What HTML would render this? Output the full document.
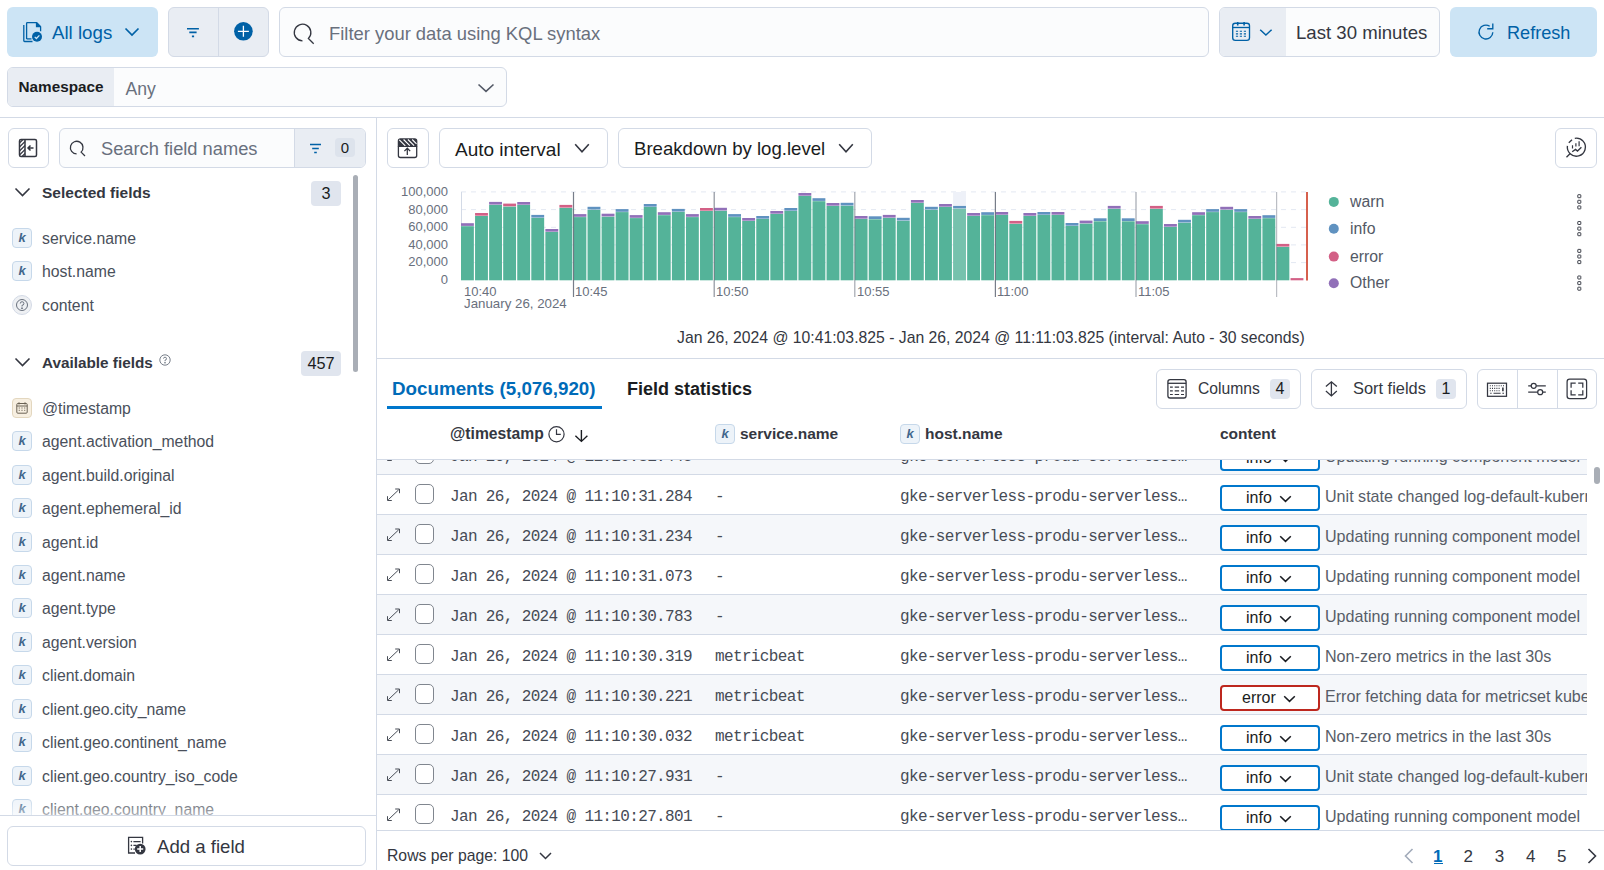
<!DOCTYPE html>
<html><head><meta charset="utf-8">
<style>
*{box-sizing:border-box;}
html,body{margin:0;padding:0;}
body{width:1604px;height:870px;position:relative;overflow:hidden;background:#fff;font-family:"Liberation Sans",sans-serif;color:#343741;}
.a{position:absolute;}
.t{position:absolute;white-space:nowrap;line-height:1;}
.mono{font-family:"Liberation Mono",monospace;}
svg{position:absolute;overflow:visible;}
.btnb{position:absolute;border:1px solid #d3dae6;border-radius:6px;background:#fff;}
.badge{position:absolute;background:#e0e5ee;border-radius:4px;color:#1a1c21;text-align:center;line-height:1;}
.tok{position:absolute;width:20px;height:20px;border-radius:4px;background:#edf3f9;border:1px solid #c6d8ea;}
.tok i{position:absolute;left:0;top:2px;width:18px;text-align:center;font-style:italic;font-weight:700;font-size:13px;color:#41668c;line-height:14px;font-family:"Liberation Sans",sans-serif;}
.fld{position:absolute;left:42px;font-size:15.8px;color:#4a505b;white-space:nowrap;line-height:1;}
</style></head>
<body>
<!-- ===== TOP BAR ===== -->
<div class="a" style="left:7px;top:7px;width:151px;height:50px;background:#cce4f5;border-radius:6px;"></div>
<svg style="left:15px;top:17px" width="30" height="30" viewBox="0 0 30 30" fill="none" stroke="#0061a6" stroke-width="1.3">
 <path d="M8.8 8 V23.8 Q8.8 24.5 9.6 24.5 H17.5"/><path d="M11.6 21.9 V6.4 Q11.6 5.6 12.4 5.6 H21.5 L25.6 9.7 V14.3"/><path d="M11.6 21.9 H16.5"/>
 <path d="M20.9 5.6 H22.3 L25.6 8.9 V10.2 H20.9 Z" fill="#0061a6" stroke="none"/>
 <circle cx="22" cy="19.8" r="5" fill="#0061a6" stroke="none"/><path d="M19.7 19.9 L21.4 21.5 L24.4 18.4" stroke="#cce4f5" stroke-width="1.3"/>
</svg>
<div class="t" style="left:52px;top:24px;font-size:18.7px;color:#0061a6;">All logs</div>
<svg style="left:124px;top:27px" width="16" height="10" viewBox="0 0 16 10" fill="none" stroke="#0061a6" stroke-width="1.7"><path d="M1.5 1.5 L8 8 L14.5 1.5"/></svg>

<div class="a" style="left:168px;top:7px;width:101px;height:50px;background:#e9edf3;border:1px solid #d3dae6;border-radius:6px;"></div>
<div class="a" style="left:218px;top:7px;width:1px;height:50px;background:#d3dae6;"></div>
<svg style="left:186px;top:26px" width="14" height="12" viewBox="0 0 14 12" fill="none" stroke="#0061a6" stroke-width="1.6"><path d="M1 2.8 H12.9 M3.3 6.4 H10.6 M5.9 10.4 H8.1"/></svg>
<svg style="left:234px;top:22px" width="19" height="19" viewBox="0 0 19 19"><circle cx="9.4" cy="9.3" r="9.3" fill="#0061a6"/><path d="M9.4 3.8 V14.8 M3.9 9.3 H14.9" stroke="#fff" stroke-width="1.3"/></svg>

<div class="a" style="left:279px;top:7px;width:930px;height:50px;background:#fbfcfd;border:1px solid #d3dae6;border-radius:6px;"></div>
<svg style="left:294px;top:24px" width="20" height="20" viewBox="0 0 20 20" fill="none" stroke="#343741" stroke-width="1.3"><path d="M8.5 16.8 A8.3 8.3 0 1 1 14.4 14.4 L19.7 19.7"/></svg>
<div class="t" style="left:329px;top:24.5px;font-size:18.4px;color:#69707d;">Filter your data using KQL syntax</div>

<div class="a" style="left:1219px;top:7px;width:221px;height:50px;background:#fbfcfd;border:1px solid #d3dae6;border-radius:6px;overflow:hidden;"><div class="a" style="left:0;top:0;width:66px;height:48px;background:#e9edf3;"></div></div>
<svg style="left:1225px;top:17px" width="60" height="30" viewBox="0 0 60 30" fill="none" stroke="#0061a6" stroke-width="1.35"><rect x="7.7" y="6.2" width="16.8" height="17.2" rx="2.6"/><path d="M7.7 10.5 H24.5"/><path d="M12.7 4.9 V8.4 M19.1 4.9 V8.4" stroke-width="1.6"/><path d="M10.9 14.2h2.2M14.8 14.2h2.2M18.8 14.2h2.2M10.9 16.9h2.2M14.8 16.9h2.2M18.8 16.9h2.2M10.9 19.3h2.2M14.8 19.3h2.2M18.8 19.3h2.2" stroke-width="1.1"/></svg>
<svg style="left:1225px;top:17px" width="60" height="30" viewBox="0 0 60 30" fill="none" stroke="#0061a6" stroke-width="1.5"><path d="M35.2 12.7 L40.9 18 L46.6 12.7"/></svg>
<div class="t" style="left:1296px;top:24px;font-size:18.6px;color:#343741;">Last 30 minutes</div>

<div class="a" style="left:1450px;top:7px;width:147px;height:50px;background:#cce4f5;border-radius:6px;"></div>
<svg style="left:1470px;top:17px" width="40" height="30" viewBox="0 0 40 30" fill="none" stroke="#0061a6" stroke-width="1.35"><path d="M22.8 15.2 A6.9 6.9 0 1 1 19.7 9.3"/><path d="M22.8 6.4 V11.7 H17.2"/></svg>
<div class="t" style="left:1507px;top:24px;font-size:18.1px;color:#0061a6;">Refresh</div>

<!-- Namespace -->
<div class="a" style="left:7px;top:67px;width:500px;height:40px;background:#fbfcfd;border:1px solid #d3dae6;border-radius:6px;overflow:hidden;"><div class="a" style="left:0;top:0;width:106px;height:38px;background:#e9edf3;"></div></div>
<div class="t" style="left:18.5px;top:79px;font-size:15.3px;font-weight:700;color:#1a1c21;">Namespace</div>
<div class="t" style="left:125.5px;top:81px;font-size:17.6px;color:#69707d;">Any</div>
<svg style="left:477px;top:83px" width="18" height="10" viewBox="0 0 18 10" fill="none" stroke="#535966" stroke-width="1.6"><path d="M1.5 1.5 L9 8.3 L16.5 1.5"/></svg>

<div class="a" style="left:0;top:117px;width:1604px;height:1px;background:#d3dae6;"></div>
<div class="a" style="left:376px;top:117px;width:1px;height:753px;background:#d3dae6;"></div>


<!-- ===== SIDEBAR ===== -->
<div class="btnb" style="left:8px;top:128px;width:41px;height:40px;"></div>
<svg style="left:18px;top:138px" width="20" height="20" viewBox="0 0 20 20" fill="none" stroke="#343741" stroke-width="1.5">
 <rect x="1.5" y="1.5" width="17" height="17" rx="1.5"/><path d="M7 1.5 V18.5"/>
 <path d="M1.5 5 L5 1.5 M1.5 9 L7 3.5 M1.5 13 L7 7.5 M1.5 17 L7 11.5 M4 18.5 L7 15.5" stroke-width="1.1"/>
 <path d="M15.5 10 H10 M12.5 7.5 L10 10 L12.5 12.5"/>
</svg>
<div class="a" style="left:59px;top:128px;width:307px;height:40px;background:#fbfcfd;border:1px solid #d3dae6;border-radius:6px;overflow:hidden;"><div class="a" style="left:234px;top:0;width:72px;height:38px;background:#e9edf3;border-left:1px solid #d3dae6;"></div></div>
<svg style="left:70px;top:141px" width="16" height="16" viewBox="0 0 16 16" fill="none" stroke="#343741" stroke-width="1.3"><path d="M6.6 12.9 A6.3 6.3 0 1 1 11.1 11.1 L15 15"/></svg>
<div class="t" style="left:101px;top:140px;font-size:18.3px;color:#69707d;">Search field names</div>
<svg style="left:309px;top:143px" width="13" height="11" viewBox="0 0 13 11" fill="none" stroke="#0061a6" stroke-width="1.4"><path d="M1 1.5 H12 M3.2 5.5 H9.8 M5.2 9.5 H7.8"/></svg>
<div class="badge" style="left:335px;top:138px;width:20px;height:19px;font-size:15px;padding-top:2px;background:#dde3ec;">0</div>

<!-- selected fields -->
<svg style="left:14px;top:187px" width="17" height="10" viewBox="0 0 17 10" fill="none" stroke="#343741" stroke-width="1.6"><path d="M1.5 1.5 L8.5 8.5 L15.5 1.5"/></svg>
<div class="t" style="left:42px;top:185px;font-size:15.5px;font-weight:700;color:#343741;">Selected fields</div>
<div class="badge" style="left:311px;top:181px;width:30px;height:25px;font-size:16.3px;padding-top:4px;">3</div>
<div class="a" style="left:353px;top:175px;width:5px;height:197px;background:#a9aeb6;border-radius:3px;"></div>

<div class="tok" style="left:12px;top:228px;"><i>k</i></div><div class="fld" style="top:231px;">service.name</div>
<div class="tok" style="left:12px;top:261px;"><i>k</i></div><div class="fld" style="top:264px;">host.name</div>
<div class="a" style="left:12px;top:295px;width:20px;height:20px;border-radius:10px;background:#eef0f3;border:1px solid #d3dae6;"></div>
<svg style="left:15px;top:298px" width="14" height="14" viewBox="0 0 14 14" fill="none" stroke="#69707d" stroke-width="1"><circle cx="7" cy="7" r="5.5"/><path d="M5.3 5.5 A1.8 1.8 0 1 1 7 7.3 V8.5"/><circle cx="7" cy="10.2" r="0.5" fill="#69707d"/></svg>
<div class="fld" style="top:298px;">content</div>

<!-- available fields -->
<svg style="left:14px;top:357px" width="17" height="10" viewBox="0 0 17 10" fill="none" stroke="#343741" stroke-width="1.6"><path d="M1.5 1.5 L8.5 8.5 L15.5 1.5"/></svg>
<div class="t" style="left:42px;top:355px;font-size:15.3px;font-weight:700;color:#343741;">Available fields</div>
<svg style="left:159px;top:354px" width="12" height="12" viewBox="0 0 12 12" fill="none" stroke="#69707d" stroke-width="0.9"><circle cx="6" cy="6" r="5.2"/><path d="M4.5 4.6 A1.5 1.5 0 1 1 6 6.2 V7.2"/><circle cx="6" cy="8.8" r="0.4" fill="#69707d"/></svg>
<div class="badge" style="left:301px;top:351px;width:40px;height:25px;font-size:16.3px;padding-top:4px;">457</div>

<div class="a" style="left:12px;top:398px;width:20px;height:20px;border-radius:4px;background:#f7efe1;border:1px solid #e3d7bf;"></div>
<svg style="left:16px;top:402px" width="12" height="12" viewBox="0 0 12 12" fill="none" stroke="#6a6254" stroke-width="1"><rect x="0.8" y="1.5" width="10.4" height="9.7" rx="1"/><path d="M0.8 4 H11.2 M3 0.3V2.5 M9 0.3V2.5"/><path d="M2.7 6h1.2M5.4 6h1.2M8.1 6h1.2M2.7 8.3h1.2M5.4 8.3h1.2M8.1 8.3h1.2" stroke-width="0.9"/></svg>
<div class="fld" style="top:401px;">@timestamp</div>
<div class="tok" style="left:12px;top:431px;"><i>k</i></div><div class="fld" style="top:434px;">agent.activation_method</div>
<div class="tok" style="left:12px;top:465px;"><i>k</i></div><div class="fld" style="top:468px;">agent.build.original</div>
<div class="tok" style="left:12px;top:498px;"><i>k</i></div><div class="fld" style="top:501px;">agent.ephemeral_id</div>
<div class="tok" style="left:12px;top:532px;"><i>k</i></div><div class="fld" style="top:535px;">agent.id</div>
<div class="tok" style="left:12px;top:565px;"><i>k</i></div><div class="fld" style="top:568px;">agent.name</div>
<div class="tok" style="left:12px;top:598px;"><i>k</i></div><div class="fld" style="top:601px;">agent.type</div>
<div class="tok" style="left:12px;top:632px;"><i>k</i></div><div class="fld" style="top:635px;">agent.version</div>
<div class="tok" style="left:12px;top:665px;"><i>k</i></div><div class="fld" style="top:668px;">client.domain</div>
<div class="tok" style="left:12px;top:699px;"><i>k</i></div><div class="fld" style="top:702px;">client.geo.city_name</div>
<div class="tok" style="left:12px;top:732px;"><i>k</i></div><div class="fld" style="top:735px;">client.geo.continent_name</div>
<div class="tok" style="left:12px;top:766px;"><i>k</i></div><div class="fld" style="top:769px;">client.geo.country_iso_code</div>
<div class="tok" style="left:12px;top:799px;"><i>k</i></div><div class="fld" style="top:802px;">client.geo.country_name</div>
<div class="a" style="left:0;top:800px;width:376px;height:15px;background:linear-gradient(rgba(255,255,255,0.1),rgba(255,255,255,0.55));"></div>
<div class="a" style="left:0;top:815px;width:376px;height:55px;background:#fff;"></div>
<div class="a" style="left:0;top:815px;width:376px;height:1px;background:#d3dae6;"></div>
<div class="btnb" style="left:7px;top:826px;width:359px;height:40px;"></div>
<svg style="left:120px;top:830px" width="40" height="32" viewBox="0 0 40 32" fill="none" stroke="#343741" stroke-width="1.3"><path d="M15 23 H8.6 V7.4 H22.6 V13.5"/><circle cx="11.4" cy="11.6" r="0.8" fill="#343741" stroke="none"/><circle cx="11.4" cy="15.4" r="0.8" fill="#343741" stroke="none"/><circle cx="11.4" cy="19.1" r="0.8" fill="#343741" stroke="none"/><path d="M13.4 11.6 H20.6 M13.4 15.4 H16.5 M13.4 19.1 H14.8" stroke-width="1.1"/><circle cx="20.2" cy="19.1" r="5.4" fill="#343741" stroke="none"/><path d="M20.2 16.1 V22.1 M17.2 19.1 H23.2" stroke="#fff" stroke-width="1.5"/></svg>
<div class="t" style="left:157px;top:838px;font-size:18.6px;color:#343741;">Add a field</div>

<div class="btnb" style="left:387px;top:128px;width:42px;height:40px;"></div>
<svg style="left:397px;top:137.8px" width="21" height="21" viewBox="0 0 21 21" fill="none" stroke="#343741" stroke-width="1.3"><path d="M1.4 8.4 V3 Q1.4 1 3.4 1 H17.7 Q19.7 1 19.7 3 V8.4 Z" fill="#343741"/><path d="M2.3 1.8 L8.3 7.8 M6.6 1.5 L12.8 7.7 M10.9 1.5 L17.1 7.7 M15.2 1.5 L19.5 5.8" stroke="#fff" stroke-width="1.1"/><path d="M1.4 8.4 V17.5 Q1.4 19.5 3.4 19.5 H17.7 Q19.7 19.5 19.7 17.5 V8.4"/><path d="M10.3 17 V10.3 M7.4 13.1 L10.3 10.2 L13.2 13.1"/></svg>
<div class="btnb" style="left:439px;top:128px;width:169px;height:40px;"></div>
<div class="t" style="left:455px;top:140px;font-size:19px;color:#1a1c21;">Auto interval</div>
<svg style="left:574px;top:143px" width="16" height="10" viewBox="0 0 16 10" fill="none" stroke="#343741" stroke-width="1.6"><path d="M1.2 1.2 L8.0 8.8 L14.8 1.2"/></svg>
<div class="btnb" style="left:618px;top:128px;width:254px;height:40px;"></div>
<div class="t" style="left:634px;top:140px;font-size:18.6px;color:#1a1c21;">Breakdown by log.level</div>
<svg style="left:838px;top:143px" width="16" height="10" viewBox="0 0 16 10" fill="none" stroke="#343741" stroke-width="1.6"><path d="M1.2 1.2 L8.0 8.8 L14.8 1.2"/></svg>
<div class="btnb" style="left:1555px;top:128px;width:42px;height:40px;"></div>
<svg style="left:1555px;top:128px" width="42" height="40" viewBox="0 0 42 40" fill="none" stroke="#343741" stroke-width="1.35"><path d="M19.8 10.3 A9 9 0 1 1 15.2 25.7 A9 9 0 0 1 12.4 17.9"/><path d="M13.8 14.7 L17 11.7"/><path d="M15.2 25.6 L11.5 29.2"/><path d="M17.5 17.2 V20.5 M20.9 15.2 V18.4 M24.1 13.3 V18.2" stroke-width="1.2"/><path d="M17.2 23.7 L20.5 21.4 L22.5 23 L26.4 19.3"/></svg>
<svg style="left:0;top:0" width="1604" height="870" viewBox="0 0 1604 870">
<line x1="461" y1="191.9" x2="1306" y2="191.9" stroke="#e3e8f2" stroke-width="1" stroke-dasharray="5 5"/>
<line x1="461" y1="209.6" x2="1306" y2="209.6" stroke="#e3e8f2" stroke-width="1" stroke-dasharray="5 5"/>
<line x1="461" y1="227.3" x2="1306" y2="227.3" stroke="#e3e8f2" stroke-width="1" stroke-dasharray="5 5"/>
<line x1="461" y1="244.9" x2="1306" y2="244.9" stroke="#e3e8f2" stroke-width="1" stroke-dasharray="5 5"/>
<line x1="461" y1="262.6" x2="1306" y2="262.6" stroke="#e3e8f2" stroke-width="1" stroke-dasharray="5 5"/>
<line x1="461.5" y1="192" x2="461.5" y2="280" stroke="#d3dae6" stroke-width="1"/>
<rect x="461.00" y="226.2" width="12.86" height="54.1" fill="#54b399"/>
<rect x="461.00" y="223.2" width="12.86" height="2.7" fill="#9170b8"/>
<rect x="475.06" y="216.0" width="12.86" height="64.3" fill="#54b399"/>
<rect x="475.06" y="213.0" width="12.86" height="2.7" fill="#d36086"/>
<rect x="489.12" y="204.9" width="12.86" height="75.4" fill="#54b399"/>
<rect x="489.12" y="201.9" width="12.86" height="2.7" fill="#9170b8"/>
<rect x="503.18" y="206.6" width="12.86" height="73.7" fill="#54b399"/>
<rect x="503.18" y="203.6" width="12.86" height="2.7" fill="#d36086"/>
<rect x="517.24" y="205.0" width="12.86" height="75.3" fill="#54b399"/>
<rect x="517.24" y="202.0" width="12.86" height="2.7" fill="#9170b8"/>
<rect x="531.30" y="217.9" width="12.86" height="62.4" fill="#54b399"/>
<rect x="531.30" y="214.9" width="12.86" height="2.7" fill="#6092c0"/>
<rect x="545.36" y="232.0" width="12.86" height="48.3" fill="#54b399"/>
<rect x="545.36" y="229.0" width="12.86" height="2.7" fill="#9170b8"/>
<rect x="559.42" y="207.9" width="12.86" height="72.4" fill="#54b399"/>
<rect x="559.42" y="204.9" width="12.86" height="2.7" fill="#d36086"/>
<rect x="573.48" y="217.1" width="12.86" height="63.2" fill="#54b399"/>
<rect x="573.48" y="214.1" width="12.86" height="2.7" fill="#9170b8"/>
<rect x="587.54" y="209.8" width="12.86" height="70.5" fill="#54b399"/>
<rect x="587.54" y="206.8" width="12.86" height="2.7" fill="#6092c0"/>
<rect x="601.60" y="216.7" width="12.86" height="63.6" fill="#54b399"/>
<rect x="601.60" y="213.7" width="12.86" height="2.7" fill="#9170b8"/>
<rect x="615.66" y="212.1" width="12.86" height="68.2" fill="#54b399"/>
<rect x="615.66" y="209.1" width="12.86" height="2.7" fill="#6092c0"/>
<rect x="629.72" y="218.1" width="12.86" height="62.2" fill="#54b399"/>
<rect x="629.72" y="215.1" width="12.86" height="2.7" fill="#9170b8"/>
<rect x="643.78" y="207.0" width="12.86" height="73.3" fill="#54b399"/>
<rect x="643.78" y="204.0" width="12.86" height="2.7" fill="#6092c0"/>
<rect x="657.84" y="215.2" width="12.86" height="65.1" fill="#54b399"/>
<rect x="657.84" y="212.2" width="12.86" height="2.7" fill="#9170b8"/>
<rect x="671.90" y="211.9" width="12.86" height="68.4" fill="#54b399"/>
<rect x="671.90" y="208.9" width="12.86" height="2.7" fill="#6092c0"/>
<rect x="685.96" y="217.1" width="12.86" height="63.2" fill="#54b399"/>
<rect x="685.96" y="214.1" width="12.86" height="2.7" fill="#9170b8"/>
<rect x="700.02" y="211.0" width="12.86" height="69.3" fill="#54b399"/>
<rect x="700.02" y="208.0" width="12.86" height="2.7" fill="#d36086"/>
<rect x="714.08" y="210.8" width="12.86" height="69.5" fill="#54b399"/>
<rect x="714.08" y="207.8" width="12.86" height="2.7" fill="#9170b8"/>
<rect x="728.14" y="217.1" width="12.86" height="63.2" fill="#54b399"/>
<rect x="728.14" y="214.1" width="12.86" height="2.7" fill="#6092c0"/>
<rect x="742.20" y="221.0" width="12.86" height="59.3" fill="#54b399"/>
<rect x="742.20" y="218.0" width="12.86" height="2.7" fill="#9170b8"/>
<rect x="756.26" y="219.0" width="12.86" height="61.3" fill="#54b399"/>
<rect x="756.26" y="216.0" width="12.86" height="2.7" fill="#6092c0"/>
<rect x="770.32" y="214.0" width="12.86" height="66.3" fill="#54b399"/>
<rect x="770.32" y="211.0" width="12.86" height="2.7" fill="#9170b8"/>
<rect x="784.38" y="211.0" width="12.86" height="69.3" fill="#54b399"/>
<rect x="784.38" y="208.0" width="12.86" height="2.7" fill="#6092c0"/>
<rect x="798.44" y="196.0" width="12.86" height="84.3" fill="#54b399"/>
<rect x="798.44" y="193.0" width="12.86" height="2.7" fill="#9170b8"/>
<rect x="812.50" y="201.2" width="12.86" height="79.1" fill="#54b399"/>
<rect x="812.50" y="198.2" width="12.86" height="2.7" fill="#6092c0"/>
<rect x="826.56" y="206.0" width="12.86" height="74.3" fill="#54b399"/>
<rect x="826.56" y="203.0" width="12.86" height="2.7" fill="#9170b8"/>
<rect x="840.62" y="205.8" width="12.86" height="74.5" fill="#54b399"/>
<rect x="840.62" y="202.8" width="12.86" height="2.7" fill="#6092c0"/>
<rect x="854.68" y="219.0" width="12.86" height="61.3" fill="#54b399"/>
<rect x="854.68" y="216.0" width="12.86" height="2.7" fill="#9170b8"/>
<rect x="868.74" y="219.3" width="12.86" height="61.0" fill="#54b399"/>
<rect x="868.74" y="216.3" width="12.86" height="2.7" fill="#6092c0"/>
<rect x="882.80" y="217.9" width="12.86" height="62.4" fill="#54b399"/>
<rect x="882.80" y="214.9" width="12.86" height="2.7" fill="#9170b8"/>
<rect x="896.86" y="220.8" width="12.86" height="59.5" fill="#54b399"/>
<rect x="896.86" y="217.8" width="12.86" height="2.7" fill="#6092c0"/>
<rect x="910.92" y="203.0" width="12.86" height="77.3" fill="#54b399"/>
<rect x="910.92" y="200.0" width="12.86" height="2.7" fill="#9170b8"/>
<rect x="924.98" y="209.8" width="12.86" height="70.5" fill="#54b399"/>
<rect x="924.98" y="206.8" width="12.86" height="2.7" fill="#6092c0"/>
<rect x="939.04" y="207.0" width="12.86" height="73.3" fill="#54b399"/>
<rect x="939.04" y="204.0" width="12.86" height="2.7" fill="#9170b8"/>
<rect x="953.10" y="208.7" width="12.86" height="71.6" fill="#54b399"/>
<rect x="953.10" y="205.7" width="12.86" height="2.7" fill="#6092c0"/>
<rect x="953.10" y="192" width="12.86" height="13.7" fill="#eef1f8"/>
<rect x="953.10" y="208.7" width="12.86" height="71.6" fill="#ffffff" opacity="0.2"/>
<rect x="967.16" y="216.0" width="12.86" height="64.3" fill="#54b399"/>
<rect x="967.16" y="213.0" width="12.86" height="2.7" fill="#9170b8"/>
<rect x="981.22" y="215.2" width="12.86" height="65.1" fill="#54b399"/>
<rect x="981.22" y="212.2" width="12.86" height="2.7" fill="#6092c0"/>
<rect x="995.28" y="215.0" width="12.86" height="65.3" fill="#54b399"/>
<rect x="995.28" y="212.0" width="12.86" height="2.7" fill="#9170b8"/>
<rect x="1009.34" y="223.9" width="12.86" height="56.4" fill="#54b399"/>
<rect x="1009.34" y="220.9" width="12.86" height="2.7" fill="#d36086"/>
<rect x="1023.40" y="216.0" width="12.86" height="64.3" fill="#54b399"/>
<rect x="1023.40" y="213.0" width="12.86" height="2.7" fill="#9170b8"/>
<rect x="1037.46" y="215.0" width="12.86" height="65.3" fill="#54b399"/>
<rect x="1037.46" y="212.0" width="12.86" height="2.7" fill="#6092c0"/>
<rect x="1051.52" y="215.0" width="12.86" height="65.3" fill="#54b399"/>
<rect x="1051.52" y="212.0" width="12.86" height="2.7" fill="#9170b8"/>
<rect x="1065.58" y="226.0" width="12.86" height="54.3" fill="#54b399"/>
<rect x="1065.58" y="223.0" width="12.86" height="2.7" fill="#6092c0"/>
<rect x="1079.64" y="223.6" width="12.86" height="56.7" fill="#54b399"/>
<rect x="1079.64" y="220.6" width="12.86" height="2.7" fill="#9170b8"/>
<rect x="1093.70" y="221.3" width="12.86" height="59.0" fill="#54b399"/>
<rect x="1093.70" y="218.3" width="12.86" height="2.7" fill="#6092c0"/>
<rect x="1107.76" y="208.9" width="12.86" height="71.4" fill="#54b399"/>
<rect x="1107.76" y="205.9" width="12.86" height="2.7" fill="#9170b8"/>
<rect x="1121.82" y="221.3" width="12.86" height="59.0" fill="#54b399"/>
<rect x="1121.82" y="218.3" width="12.86" height="2.7" fill="#6092c0"/>
<rect x="1135.88" y="224.2" width="12.86" height="56.1" fill="#54b399"/>
<rect x="1135.88" y="221.2" width="12.86" height="2.7" fill="#9170b8"/>
<rect x="1149.94" y="208.9" width="12.86" height="71.4" fill="#54b399"/>
<rect x="1149.94" y="205.9" width="12.86" height="2.7" fill="#d36086"/>
<rect x="1164.00" y="227.0" width="12.86" height="53.3" fill="#54b399"/>
<rect x="1164.00" y="224.0" width="12.86" height="2.7" fill="#9170b8"/>
<rect x="1178.06" y="222.8" width="12.86" height="57.5" fill="#54b399"/>
<rect x="1178.06" y="219.8" width="12.86" height="2.7" fill="#6092c0"/>
<rect x="1192.12" y="215.2" width="12.86" height="65.1" fill="#54b399"/>
<rect x="1192.12" y="212.2" width="12.86" height="2.7" fill="#9170b8"/>
<rect x="1206.18" y="212.1" width="12.86" height="68.2" fill="#54b399"/>
<rect x="1206.18" y="209.1" width="12.86" height="2.7" fill="#6092c0"/>
<rect x="1220.24" y="209.8" width="12.86" height="70.5" fill="#54b399"/>
<rect x="1220.24" y="206.8" width="12.86" height="2.7" fill="#9170b8"/>
<rect x="1234.30" y="212.1" width="12.86" height="68.2" fill="#54b399"/>
<rect x="1234.30" y="209.1" width="12.86" height="2.7" fill="#6092c0"/>
<rect x="1248.36" y="219.0" width="12.86" height="61.3" fill="#54b399"/>
<rect x="1248.36" y="216.0" width="12.86" height="2.7" fill="#9170b8"/>
<rect x="1262.42" y="218.2" width="12.86" height="62.1" fill="#54b399"/>
<rect x="1262.42" y="215.2" width="12.86" height="2.7" fill="#6092c0"/>
<rect x="1276.48" y="246.9" width="12.86" height="33.4" fill="#54b399"/>
<rect x="1276.48" y="243.9" width="12.86" height="2.7" fill="#d36086"/>
<rect x="1290.54" y="278.1" width="12.86" height="2.2" fill="#d36086"/>
<line x1="573.5" y1="192" x2="573.5" y2="297" stroke="#69707d" stroke-width="1.2" opacity="0.9"/>
<line x1="714.2" y1="192" x2="714.2" y2="297" stroke="#69707d" stroke-width="1.2" opacity="0.75"/>
<line x1="854.8" y1="192" x2="854.8" y2="297" stroke="#69707d" stroke-width="1.2" opacity="0.6"/>
<line x1="995.4" y1="192" x2="995.4" y2="297" stroke="#69707d" stroke-width="1.2" opacity="0.9"/>
<line x1="1136" y1="192" x2="1136" y2="297" stroke="#69707d" stroke-width="1.2" opacity="0.6"/>
<line x1="1276.6" y1="192" x2="1276.6" y2="297" stroke="#69707d" stroke-width="1.2" opacity="0.45"/>
<line x1="1307" y1="192" x2="1307" y2="280.5" stroke="#d6604d" stroke-width="2"/>
<circle cx="1333.8" cy="201.9" r="5" fill="#54b399"/>
<rect x="1577.8" y="194.7" width="3" height="3" rx="0.4" fill="none" stroke="#343741" stroke-width="0.95"/>
<rect x="1577.8" y="200.3" width="3" height="3" rx="0.4" fill="none" stroke="#343741" stroke-width="0.95"/>
<rect x="1577.8" y="205.9" width="3" height="3" rx="0.4" fill="none" stroke="#343741" stroke-width="0.95"/>
<circle cx="1333.8" cy="228.7" r="5" fill="#6092c0"/>
<rect x="1577.8" y="221.5" width="3" height="3" rx="0.4" fill="none" stroke="#343741" stroke-width="0.95"/>
<rect x="1577.8" y="227.1" width="3" height="3" rx="0.4" fill="none" stroke="#343741" stroke-width="0.95"/>
<rect x="1577.8" y="232.7" width="3" height="3" rx="0.4" fill="none" stroke="#343741" stroke-width="0.95"/>
<circle cx="1333.8" cy="256.6" r="5" fill="#d36086"/>
<rect x="1577.8" y="249.4" width="3" height="3" rx="0.4" fill="none" stroke="#343741" stroke-width="0.95"/>
<rect x="1577.8" y="255.0" width="3" height="3" rx="0.4" fill="none" stroke="#343741" stroke-width="0.95"/>
<rect x="1577.8" y="260.6" width="3" height="3" rx="0.4" fill="none" stroke="#343741" stroke-width="0.95"/>
<circle cx="1333.8" cy="283.2" r="5" fill="#9170b8"/>
<rect x="1577.8" y="276.0" width="3" height="3" rx="0.4" fill="none" stroke="#343741" stroke-width="0.95"/>
<rect x="1577.8" y="281.6" width="3" height="3" rx="0.4" fill="none" stroke="#343741" stroke-width="0.95"/>
<rect x="1577.8" y="287.2" width="3" height="3" rx="0.4" fill="none" stroke="#343741" stroke-width="0.95"/>
</svg>
<div class="t" style="left:340px;width:108px;text-align:right;top:185.1px;font-size:13px;color:#69707d;">100,000</div>
<div class="t" style="left:340px;width:108px;text-align:right;top:202.7px;font-size:13px;color:#69707d;">80,000</div>
<div class="t" style="left:340px;width:108px;text-align:right;top:220.3px;font-size:13px;color:#69707d;">60,000</div>
<div class="t" style="left:340px;width:108px;text-align:right;top:237.8px;font-size:13px;color:#69707d;">40,000</div>
<div class="t" style="left:340px;width:108px;text-align:right;top:255.4px;font-size:13px;color:#69707d;">20,000</div>
<div class="t" style="left:340px;width:108px;text-align:right;top:273.0px;font-size:13px;color:#69707d;">0</div>
<div class="t" style="left:464px;top:285px;font-size:13px;color:#69707d;">10:40</div>
<div class="t" style="left:575px;top:285px;font-size:13px;color:#69707d;">10:45</div>
<div class="t" style="left:716px;top:285px;font-size:13px;color:#69707d;">10:50</div>
<div class="t" style="left:857px;top:285px;font-size:13px;color:#69707d;">10:55</div>
<div class="t" style="left:997px;top:285px;font-size:13px;color:#69707d;">11:00</div>
<div class="t" style="left:1138px;top:285px;font-size:13px;color:#69707d;">11:05</div>
<div class="t" style="left:464px;top:297px;font-size:13.3px;color:#69707d;">January 26, 2024</div>
<div class="t" style="left:1350px;top:193.9px;font-size:15.8px;color:#535966;">warn</div>
<div class="t" style="left:1350px;top:220.7px;font-size:15.8px;color:#535966;">info</div>
<div class="t" style="left:1350px;top:248.6px;font-size:15.8px;color:#535966;">error</div>
<div class="t" style="left:1350px;top:275.2px;font-size:15.8px;color:#535966;">Other</div>
<div class="t" style="left:677px;top:330px;font-size:15.75px;color:#343741;">Jan 26, 2024 @ 10:41:03.825 - Jan 26, 2024 @ 11:11:03.825 (interval: Auto - 30 seconds)</div>
<div class="a" style="left:377px;top:358px;width:1227px;height:1px;background:#d3dae6;"></div>
<div class="t" style="left:392px;top:380px;font-size:18.8px;font-weight:700;color:#006bb8;">Documents (5,076,920)</div>
<div class="a" style="left:387px;top:406px;width:215px;height:2.8px;background:#0077cc;"></div>
<div class="t" style="left:627px;top:380px;font-size:18px;font-weight:700;color:#1a1c21;">Field statistics</div>
<div class="btnb" style="left:1156px;top:369px;width:145px;height:40px;"></div>
<svg style="left:1160px;top:374px" width="40" height="30" viewBox="0 0 40 30" fill="none" stroke="#343741" stroke-width="1.3"><rect x="7.9" y="5.7" width="18.2" height="18.3" rx="2.2"/><path d="M7.9 9.3 H26.1"/><path d="M10 13.1 H12.8 M14.7 13.1 H19.1 M21 13.1 H24 M10 16.9 H12.8 M14.7 16.9 H19.1 M21 16.9 H24 M10 20.5 H12.8 M14.7 20.5 H19.1 M21 20.5 H24" stroke-width="1.2"/></svg>
<div class="t" style="left:1198px;top:381px;font-size:15.7px;color:#343741;">Columns</div>
<div class="badge" style="left:1270px;top:379px;width:20px;height:20px;font-size:16px;padding-top:2px;">4</div>
<div class="btnb" style="left:1311px;top:369px;width:156px;height:40px;"></div>
<svg style="left:1318px;top:374px" width="30" height="30" viewBox="0 0 30 30" fill="none" stroke="#343741" stroke-width="1.3"><path d="M13.4 7.9 V21.7 M7.9 12.6 L13.4 7.8 L18.8 12.6 M7.9 17.1 L13.4 21.9 L18.8 17.1"/></svg>
<div class="t" style="left:1353px;top:380px;font-size:16.4px;color:#343741;">Sort fields</div>
<div class="badge" style="left:1436px;top:379px;width:20px;height:20px;font-size:16px;padding-top:2px;">1</div>
<div class="btnb" style="left:1477px;top:369px;width:120px;height:40px;"></div>
<div class="a" style="left:1517px;top:369px;width:1px;height:40px;background:#d3dae6;"></div>
<div class="a" style="left:1557px;top:369px;width:1px;height:40px;background:#d3dae6;"></div>
<svg style="left:1477px;top:369px" width="120" height="40" viewBox="0 0 120 40" fill="none" stroke="#343741" stroke-width="1.25"><rect x="10.5" y="14.2" width="19" height="13.1"/><path d="M12.8 16.8h1M15 16.8h1M17.2 16.8h1M19.4 16.8h1M21.6 16.8h1M23.8 16.8h1M26 16.8h1M12.8 19.4h1M15 19.4h1M17.2 19.4h1M19.4 19.4h1M21.6 19.4h1M12.8 21.8h1M15 21.8h1M17.2 21.8h1M19.4 21.8h1M21.6 21.8h1M13.2 24.3h1.4M16.5 24.3h7.1M25.4 24.3h1.6" stroke-width="1.1"/><path d="M25.9 18.6 V22.2" stroke-width="1.6"/><path d="M51.2 16.8 H54.2 M59.2 16.8 H68.8 M51.2 23.2 H60.7 M65.7 23.2 H68.8"/><circle cx="56.7" cy="16.8" r="2.5"/><circle cx="63.2" cy="23.2" r="2.5"/><rect x="90.1" y="10.1" width="19.5" height="19.4" rx="2.6"/><path d="M94.1 18.8 V14.2 H98.7 M101.2 14.2 H105.8 V18.8 M105.8 21.2 V25.8 H101.2 M98.7 25.8 H94.1 V21.2"/></svg>
<div class="t" style="left:450px;top:426px;font-size:15.7px;font-weight:700;color:#343741;">@timestamp</div>
<svg style="left:547px;top:425px" width="18" height="18" viewBox="0 0 18 18" fill="none" stroke="#343741" stroke-width="1.2"><circle cx="9.5" cy="9.2" r="7.6"/><path d="M9.5 4.2 V9.4 H13.8"/></svg>
<svg style="left:575px;top:429px" width="14" height="14" viewBox="0 0 14 14" fill="none" stroke="#1a1c21" stroke-width="1.4"><path d="M6.4 1.1 V12.3 M0.4 6.7 L6.4 12.4 L12.4 6.7"/></svg>
<div class="tok" style="left:715px;top:424px;"><i>k</i></div>
<div class="t" style="left:740px;top:426px;font-size:15.5px;font-weight:700;color:#343741;">service.name</div>
<div class="tok" style="left:900px;top:424px;"><i>k</i></div>
<div class="t" style="left:925px;top:426px;font-size:15.5px;font-weight:700;color:#343741;">host.name</div>
<div class="t" style="left:1220px;top:426px;font-size:15.5px;font-weight:700;color:#343741;">content</div>

<div class="a" style="left:377px;top:459px;width:1210px;height:371px;overflow:hidden;">
<div class="a" style="left:0;top:-24.5px;width:1210px;height:40px;background:#f5f7fa;border-bottom:1px solid #d3dae6;"></div>
<svg style="left:9px;top:-11.5px" width="15" height="14" viewBox="0 0 15 14" fill="none" stroke="#3f444e" stroke-width="0.95"><path d="M2.3 11.7 L12.7 1.8 M9.2 1 H13.5 V5.2 M1.5 8.2 V12.5 H5.8"/></svg>
<div class="a" style="left:38px;top:-15.0px;width:19px;height:20px;border:1.1px solid #80868f;border-radius:5px;background:#fff;"></div>
<div class="t mono" style="left:73px;top:-10.4px;font-size:16px;letter-spacing:-0.64px;color:#464b55;">Jan 26, 2024 @ 11:10:31.445</div>
<div class="t mono" style="left:338px;top:-10.4px;font-size:16px;letter-spacing:-0.64px;color:#464b55;">-</div>
<div class="t mono" style="left:523px;top:-10.4px;font-size:16px;letter-spacing:-0.64px;color:#464b55;">gke-serverless-produ-serverless…</div>
<div class="a" style="left:843px;top:-14.0px;width:99.5px;height:25.5px;border:2px solid #0077cc;border-radius:4px;background:#fff;"></div>
<div class="t" style="left:869px;top:-9.0px;font-size:16px;color:#1a1c21;">info</div>
<svg style="left:902px;top:-4.2px" width="13" height="8" viewBox="0 0 13 8" fill="none" stroke="#1a1c21" stroke-width="1.5"><path d="M1.2 1.2 L6.5 6.4 L11.8 1.2"/></svg>
<div class="a" style="left:948px;top:-24.5px;width:262px;height:40px;overflow:hidden;"><div class="t" style="left:0;top:13px;font-size:16.1px;color:#575d68;">Updating running component model</div></div>
<div class="a" style="left:0;top:15.5px;width:1210px;height:40px;background:#ffffff;border-bottom:1px solid #d3dae6;"></div>
<svg style="left:9px;top:28.5px" width="15" height="14" viewBox="0 0 15 14" fill="none" stroke="#3f444e" stroke-width="0.95"><path d="M2.3 11.7 L12.7 1.8 M9.2 1 H13.5 V5.2 M1.5 8.2 V12.5 H5.8"/></svg>
<div class="a" style="left:38px;top:25.0px;width:19px;height:20px;border:1.1px solid #80868f;border-radius:5px;background:#fff;"></div>
<div class="t mono" style="left:73px;top:29.6px;font-size:16px;letter-spacing:-0.64px;color:#464b55;">Jan 26, 2024 @ 11:10:31.284</div>
<div class="t mono" style="left:338px;top:29.6px;font-size:16px;letter-spacing:-0.64px;color:#464b55;">-</div>
<div class="t mono" style="left:523px;top:29.6px;font-size:16px;letter-spacing:-0.64px;color:#464b55;">gke-serverless-produ-serverless…</div>
<div class="a" style="left:843px;top:26.0px;width:99.5px;height:25.5px;border:2px solid #0077cc;border-radius:4px;background:#fff;"></div>
<div class="t" style="left:869px;top:31.0px;font-size:16px;color:#1a1c21;">info</div>
<svg style="left:902px;top:35.8px" width="13" height="8" viewBox="0 0 13 8" fill="none" stroke="#1a1c21" stroke-width="1.5"><path d="M1.2 1.2 L6.5 6.4 L11.8 1.2"/></svg>
<div class="a" style="left:948px;top:15.5px;width:262px;height:40px;overflow:hidden;"><div class="t" style="left:0;top:13px;font-size:16.1px;color:#575d68;">Unit state changed log-default-kubernetes</div></div>
<div class="a" style="left:0;top:55.5px;width:1210px;height:40px;background:#f5f7fa;border-bottom:1px solid #d3dae6;"></div>
<svg style="left:9px;top:68.5px" width="15" height="14" viewBox="0 0 15 14" fill="none" stroke="#3f444e" stroke-width="0.95"><path d="M2.3 11.7 L12.7 1.8 M9.2 1 H13.5 V5.2 M1.5 8.2 V12.5 H5.8"/></svg>
<div class="a" style="left:38px;top:65.0px;width:19px;height:20px;border:1.1px solid #80868f;border-radius:5px;background:#fff;"></div>
<div class="t mono" style="left:73px;top:69.6px;font-size:16px;letter-spacing:-0.64px;color:#464b55;">Jan 26, 2024 @ 11:10:31.234</div>
<div class="t mono" style="left:338px;top:69.6px;font-size:16px;letter-spacing:-0.64px;color:#464b55;">-</div>
<div class="t mono" style="left:523px;top:69.6px;font-size:16px;letter-spacing:-0.64px;color:#464b55;">gke-serverless-produ-serverless…</div>
<div class="a" style="left:843px;top:66.0px;width:99.5px;height:25.5px;border:2px solid #0077cc;border-radius:4px;background:#fff;"></div>
<div class="t" style="left:869px;top:71.0px;font-size:16px;color:#1a1c21;">info</div>
<svg style="left:902px;top:75.8px" width="13" height="8" viewBox="0 0 13 8" fill="none" stroke="#1a1c21" stroke-width="1.5"><path d="M1.2 1.2 L6.5 6.4 L11.8 1.2"/></svg>
<div class="a" style="left:948px;top:55.5px;width:262px;height:40px;overflow:hidden;"><div class="t" style="left:0;top:13px;font-size:16.1px;color:#575d68;">Updating running component model</div></div>
<div class="a" style="left:0;top:95.5px;width:1210px;height:40px;background:#ffffff;border-bottom:1px solid #d3dae6;"></div>
<svg style="left:9px;top:108.5px" width="15" height="14" viewBox="0 0 15 14" fill="none" stroke="#3f444e" stroke-width="0.95"><path d="M2.3 11.7 L12.7 1.8 M9.2 1 H13.5 V5.2 M1.5 8.2 V12.5 H5.8"/></svg>
<div class="a" style="left:38px;top:105.0px;width:19px;height:20px;border:1.1px solid #80868f;border-radius:5px;background:#fff;"></div>
<div class="t mono" style="left:73px;top:109.6px;font-size:16px;letter-spacing:-0.64px;color:#464b55;">Jan 26, 2024 @ 11:10:31.073</div>
<div class="t mono" style="left:338px;top:109.6px;font-size:16px;letter-spacing:-0.64px;color:#464b55;">-</div>
<div class="t mono" style="left:523px;top:109.6px;font-size:16px;letter-spacing:-0.64px;color:#464b55;">gke-serverless-produ-serverless…</div>
<div class="a" style="left:843px;top:106.0px;width:99.5px;height:25.5px;border:2px solid #0077cc;border-radius:4px;background:#fff;"></div>
<div class="t" style="left:869px;top:111.0px;font-size:16px;color:#1a1c21;">info</div>
<svg style="left:902px;top:115.8px" width="13" height="8" viewBox="0 0 13 8" fill="none" stroke="#1a1c21" stroke-width="1.5"><path d="M1.2 1.2 L6.5 6.4 L11.8 1.2"/></svg>
<div class="a" style="left:948px;top:95.5px;width:262px;height:40px;overflow:hidden;"><div class="t" style="left:0;top:13px;font-size:16.1px;color:#575d68;">Updating running component model</div></div>
<div class="a" style="left:0;top:135.5px;width:1210px;height:40px;background:#f5f7fa;border-bottom:1px solid #d3dae6;"></div>
<svg style="left:9px;top:148.5px" width="15" height="14" viewBox="0 0 15 14" fill="none" stroke="#3f444e" stroke-width="0.95"><path d="M2.3 11.7 L12.7 1.8 M9.2 1 H13.5 V5.2 M1.5 8.2 V12.5 H5.8"/></svg>
<div class="a" style="left:38px;top:145.0px;width:19px;height:20px;border:1.1px solid #80868f;border-radius:5px;background:#fff;"></div>
<div class="t mono" style="left:73px;top:149.6px;font-size:16px;letter-spacing:-0.64px;color:#464b55;">Jan 26, 2024 @ 11:10:30.783</div>
<div class="t mono" style="left:338px;top:149.6px;font-size:16px;letter-spacing:-0.64px;color:#464b55;">-</div>
<div class="t mono" style="left:523px;top:149.6px;font-size:16px;letter-spacing:-0.64px;color:#464b55;">gke-serverless-produ-serverless…</div>
<div class="a" style="left:843px;top:146.0px;width:99.5px;height:25.5px;border:2px solid #0077cc;border-radius:4px;background:#fff;"></div>
<div class="t" style="left:869px;top:151.0px;font-size:16px;color:#1a1c21;">info</div>
<svg style="left:902px;top:155.8px" width="13" height="8" viewBox="0 0 13 8" fill="none" stroke="#1a1c21" stroke-width="1.5"><path d="M1.2 1.2 L6.5 6.4 L11.8 1.2"/></svg>
<div class="a" style="left:948px;top:135.5px;width:262px;height:40px;overflow:hidden;"><div class="t" style="left:0;top:13px;font-size:16.1px;color:#575d68;">Updating running component model</div></div>
<div class="a" style="left:0;top:175.5px;width:1210px;height:40px;background:#ffffff;border-bottom:1px solid #d3dae6;"></div>
<svg style="left:9px;top:188.5px" width="15" height="14" viewBox="0 0 15 14" fill="none" stroke="#3f444e" stroke-width="0.95"><path d="M2.3 11.7 L12.7 1.8 M9.2 1 H13.5 V5.2 M1.5 8.2 V12.5 H5.8"/></svg>
<div class="a" style="left:38px;top:185.0px;width:19px;height:20px;border:1.1px solid #80868f;border-radius:5px;background:#fff;"></div>
<div class="t mono" style="left:73px;top:189.6px;font-size:16px;letter-spacing:-0.64px;color:#464b55;">Jan 26, 2024 @ 11:10:30.319</div>
<div class="t mono" style="left:338px;top:189.6px;font-size:16px;letter-spacing:-0.64px;color:#464b55;">metricbeat</div>
<div class="t mono" style="left:523px;top:189.6px;font-size:16px;letter-spacing:-0.64px;color:#464b55;">gke-serverless-produ-serverless…</div>
<div class="a" style="left:843px;top:186.0px;width:99.5px;height:25.5px;border:2px solid #0077cc;border-radius:4px;background:#fff;"></div>
<div class="t" style="left:869px;top:191.0px;font-size:16px;color:#1a1c21;">info</div>
<svg style="left:902px;top:195.8px" width="13" height="8" viewBox="0 0 13 8" fill="none" stroke="#1a1c21" stroke-width="1.5"><path d="M1.2 1.2 L6.5 6.4 L11.8 1.2"/></svg>
<div class="a" style="left:948px;top:175.5px;width:262px;height:40px;overflow:hidden;"><div class="t" style="left:0;top:13px;font-size:16.1px;color:#575d68;">Non-zero metrics in the last 30s</div></div>
<div class="a" style="left:0;top:215.5px;width:1210px;height:40px;background:#f5f7fa;border-bottom:1px solid #d3dae6;"></div>
<svg style="left:9px;top:228.5px" width="15" height="14" viewBox="0 0 15 14" fill="none" stroke="#3f444e" stroke-width="0.95"><path d="M2.3 11.7 L12.7 1.8 M9.2 1 H13.5 V5.2 M1.5 8.2 V12.5 H5.8"/></svg>
<div class="a" style="left:38px;top:225.0px;width:19px;height:20px;border:1.1px solid #80868f;border-radius:5px;background:#fff;"></div>
<div class="t mono" style="left:73px;top:229.6px;font-size:16px;letter-spacing:-0.64px;color:#464b55;">Jan 26, 2024 @ 11:10:30.221</div>
<div class="t mono" style="left:338px;top:229.6px;font-size:16px;letter-spacing:-0.64px;color:#464b55;">metricbeat</div>
<div class="t mono" style="left:523px;top:229.6px;font-size:16px;letter-spacing:-0.64px;color:#464b55;">gke-serverless-produ-serverless…</div>
<div class="a" style="left:843px;top:226.0px;width:99.5px;height:25.5px;border:2px solid #bd271e;border-radius:4px;background:#fff;"></div>
<div class="t" style="left:865px;top:231.0px;font-size:16px;color:#1a1c21;">error</div>
<svg style="left:905.5px;top:235.8px" width="13" height="8" viewBox="0 0 13 8" fill="none" stroke="#1a1c21" stroke-width="1.5"><path d="M1.2 1.2 L6.5 6.4 L11.8 1.2"/></svg>
<div class="a" style="left:948px;top:215.5px;width:262px;height:40px;overflow:hidden;"><div class="t" style="left:0;top:13px;font-size:16.1px;color:#575d68;">Error fetching data for metricset kubernetes</div></div>
<div class="a" style="left:0;top:255.5px;width:1210px;height:40px;background:#ffffff;border-bottom:1px solid #d3dae6;"></div>
<svg style="left:9px;top:268.5px" width="15" height="14" viewBox="0 0 15 14" fill="none" stroke="#3f444e" stroke-width="0.95"><path d="M2.3 11.7 L12.7 1.8 M9.2 1 H13.5 V5.2 M1.5 8.2 V12.5 H5.8"/></svg>
<div class="a" style="left:38px;top:265.0px;width:19px;height:20px;border:1.1px solid #80868f;border-radius:5px;background:#fff;"></div>
<div class="t mono" style="left:73px;top:269.6px;font-size:16px;letter-spacing:-0.64px;color:#464b55;">Jan 26, 2024 @ 11:10:30.032</div>
<div class="t mono" style="left:338px;top:269.6px;font-size:16px;letter-spacing:-0.64px;color:#464b55;">metricbeat</div>
<div class="t mono" style="left:523px;top:269.6px;font-size:16px;letter-spacing:-0.64px;color:#464b55;">gke-serverless-produ-serverless…</div>
<div class="a" style="left:843px;top:266.0px;width:99.5px;height:25.5px;border:2px solid #0077cc;border-radius:4px;background:#fff;"></div>
<div class="t" style="left:869px;top:271.0px;font-size:16px;color:#1a1c21;">info</div>
<svg style="left:902px;top:275.8px" width="13" height="8" viewBox="0 0 13 8" fill="none" stroke="#1a1c21" stroke-width="1.5"><path d="M1.2 1.2 L6.5 6.4 L11.8 1.2"/></svg>
<div class="a" style="left:948px;top:255.5px;width:262px;height:40px;overflow:hidden;"><div class="t" style="left:0;top:13px;font-size:16.1px;color:#575d68;">Non-zero metrics in the last 30s</div></div>
<div class="a" style="left:0;top:295.5px;width:1210px;height:40px;background:#f5f7fa;border-bottom:1px solid #d3dae6;"></div>
<svg style="left:9px;top:308.5px" width="15" height="14" viewBox="0 0 15 14" fill="none" stroke="#3f444e" stroke-width="0.95"><path d="M2.3 11.7 L12.7 1.8 M9.2 1 H13.5 V5.2 M1.5 8.2 V12.5 H5.8"/></svg>
<div class="a" style="left:38px;top:305.0px;width:19px;height:20px;border:1.1px solid #80868f;border-radius:5px;background:#fff;"></div>
<div class="t mono" style="left:73px;top:309.6px;font-size:16px;letter-spacing:-0.64px;color:#464b55;">Jan 26, 2024 @ 11:10:27.931</div>
<div class="t mono" style="left:338px;top:309.6px;font-size:16px;letter-spacing:-0.64px;color:#464b55;">-</div>
<div class="t mono" style="left:523px;top:309.6px;font-size:16px;letter-spacing:-0.64px;color:#464b55;">gke-serverless-produ-serverless…</div>
<div class="a" style="left:843px;top:306.0px;width:99.5px;height:25.5px;border:2px solid #0077cc;border-radius:4px;background:#fff;"></div>
<div class="t" style="left:869px;top:311.0px;font-size:16px;color:#1a1c21;">info</div>
<svg style="left:902px;top:315.8px" width="13" height="8" viewBox="0 0 13 8" fill="none" stroke="#1a1c21" stroke-width="1.5"><path d="M1.2 1.2 L6.5 6.4 L11.8 1.2"/></svg>
<div class="a" style="left:948px;top:295.5px;width:262px;height:40px;overflow:hidden;"><div class="t" style="left:0;top:13px;font-size:16.1px;color:#575d68;">Unit state changed log-default-kubernetes</div></div>
<div class="a" style="left:0;top:335.5px;width:1210px;height:40px;background:#ffffff;border-bottom:1px solid #d3dae6;"></div>
<svg style="left:9px;top:348.5px" width="15" height="14" viewBox="0 0 15 14" fill="none" stroke="#3f444e" stroke-width="0.95"><path d="M2.3 11.7 L12.7 1.8 M9.2 1 H13.5 V5.2 M1.5 8.2 V12.5 H5.8"/></svg>
<div class="a" style="left:38px;top:345.0px;width:19px;height:20px;border:1.1px solid #80868f;border-radius:5px;background:#fff;"></div>
<div class="t mono" style="left:73px;top:349.6px;font-size:16px;letter-spacing:-0.64px;color:#464b55;">Jan 26, 2024 @ 11:10:27.801</div>
<div class="t mono" style="left:338px;top:349.6px;font-size:16px;letter-spacing:-0.64px;color:#464b55;">-</div>
<div class="t mono" style="left:523px;top:349.6px;font-size:16px;letter-spacing:-0.64px;color:#464b55;">gke-serverless-produ-serverless…</div>
<div class="a" style="left:843px;top:346.0px;width:99.5px;height:25.5px;border:2px solid #0077cc;border-radius:4px;background:#fff;"></div>
<div class="t" style="left:869px;top:351.0px;font-size:16px;color:#1a1c21;">info</div>
<svg style="left:902px;top:355.8px" width="13" height="8" viewBox="0 0 13 8" fill="none" stroke="#1a1c21" stroke-width="1.5"><path d="M1.2 1.2 L6.5 6.4 L11.8 1.2"/></svg>
<div class="a" style="left:948px;top:335.5px;width:262px;height:40px;overflow:hidden;"><div class="t" style="left:0;top:13px;font-size:16.1px;color:#575d68;">Updating running component model</div></div>
</div>
<div class="a" style="left:377px;top:459px;width:1210px;height:1px;background:#d3dae6;"></div>
<div class="a" style="left:1594px;top:467px;width:6px;height:17px;background:#a9aeb6;border-radius:3px;"></div>
<div class="a" style="left:377px;top:830px;width:1227px;height:1px;background:#d3dae6;"></div>
<div class="t" style="left:387px;top:848px;font-size:15.75px;color:#343741;">Rows per page: 100</div>
<svg style="left:539px;top:852px" width="13" height="8" viewBox="0 0 13 8" fill="none" stroke="#343741" stroke-width="1.5"><path d="M1 1 L6.5 6.5 L12 1"/></svg>
<svg style="left:1404px;top:848px" width="10" height="16" viewBox="0 0 10 16" fill="none" stroke="#a2abba" stroke-width="1.6"><path d="M8.5 1 L1.5 8 L8.5 15"/></svg>
<svg style="left:1587px;top:848px" width="10" height="16" viewBox="0 0 10 16" fill="none" stroke="#343741" stroke-width="1.6"><path d="M1.5 1 L8.5 8 L1.5 15"/></svg>
<div class="t" style="left:1433px;top:848px;font-size:17px;font-weight:700;color:#006bb8;">1</div>
<div class="a" style="left:1434px;top:862.5px;width:9px;height:1.5px;background:#006bb8;"></div>
<div class="t" style="left:1463.6px;top:848px;font-size:17px;color:#343741;">2</div>
<div class="t" style="left:1494.7px;top:848px;font-size:17px;color:#343741;">3</div>
<div class="t" style="left:1526.1px;top:848px;font-size:17px;color:#343741;">4</div>
<div class="t" style="left:1556.9px;top:848px;font-size:17px;color:#343741;">5</div>

</body></html>
